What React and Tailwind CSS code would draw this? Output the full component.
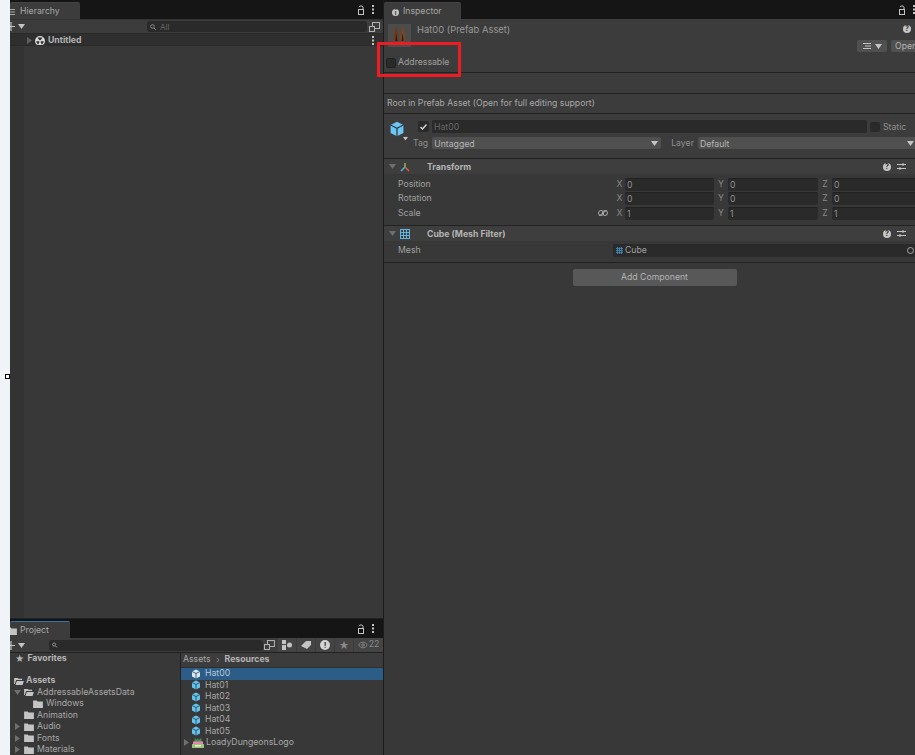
import { ChevronDown, Eye } from 'lucide-react';

const font = { fontFamily: 'Inter, sans-serif' };

function Caret({ className = '' }) {
  return (
    <svg width="7" height="5" viewBox="0 0 7 5" className={className}>
      <path d="M0 0h7L3.5 5z" fill="currentColor" />
    </svg>
  );
}

function Arrow({ className = '' }) {
  return (
    <svg width="5" height="7" viewBox="0 0 5 7" className={className}>
      <path d="M0 0v7l5-3.5z" fill="currentColor" />
    </svg>
  );
}

function Cube({ size = 10, color = '#62c4ef', seam = '#2b3a44' }) {
  return (
    <svg width={size} height={size} viewBox="0 0 20 20" className="shrink-0">
      <path d="M10 1l8 4v10l-8 4-8-4V5z" fill={color} />
      <path d="M2 5l8 4 8-4M10 9v10" fill="none" stroke={seam} strokeWidth="1.6" />
    </svg>
  );
}

function Folder({ open = false }) {
  return (
    <svg width="10" height="8" viewBox="0 0 11 9" className="shrink-0">
      {open ? (
        <path d="M0 1h4l1 1h4v1.500H2.200L0.800 8H0zM3 4.500h8L9.500 9H1.500z" fill="#c4c4c4" />
      ) : (
        <path d="M0 0.500h4l1 1.200h6V9H0z" fill="#c4c4c4" />
      )}
    </svg>
  );
}

function Help() {
  return (
    <span className="block w-[8px] h-[8px] rounded-full bg-[#c4c4c4] text-[#333] text-[7px] leading-[8px] font-bold text-center">?</span>
  );
}

function Sliders() {
  return (
    <svg width="9" height="9" viewBox="0 0 9 9" className="text-[#c4c4c4]">
      <path d="M0 2.500h9M0 6.500h9M6 1v3M3 5v3" stroke="currentColor" strokeWidth="1" fill="none" />
    </svg>
  );
}

function LockIcon() {
  return (
    <svg width="6" height="10" viewBox="0 0 6 10" fill="none" stroke="#c4c4c4" className="shrink-0">
      <rect x="0.500" y="4.500" width="5" height="5" />
      <path d="M1 2.200C1 0.500 5 0.500 5 2.200V4.500" />
    </svg>
  );
}

function Dots() {
  return (
    <svg width="2" height="9" viewBox="0 0 2 9" fill="#c4c4c4" className="shrink-0">
      <rect y="0" width="2" height="2" />
      <rect y="3.500" width="2" height="2" />
      <rect y="7" width="2" height="2" />
    </svg>
  );
}

function TabBar({ icon, label, width, gap, highlight = false, rightPad }) {
  return (
    <div className={`h-[19px] bg-[#151515] flex items-end justify-between shrink-0 ${rightPad}`}>
      <div className={`h-[17px] ${width} ${gap} bg-[#3c3c3c] rounded-t-[2px] flex items-center overflow-hidden text-[8.7px] text-[#a8a8a8] border-t pt-[2px] ${highlight ? 'border-[#3a72aa]' : 'border-[#444]'}`}>
        {icon}
        <span>{label}</span>
      </div>
      <div className="flex items-center gap-[8px] h-[19px]">
        <LockIcon />
        <Dots />
      </div>
    </div>
  );
}

function PlusMenu() {
  return (
    <div className="flex items-center gap-[3px] text-[#c4c4c4] overflow-hidden w-[16px] shrink-0">
      <svg width="7" height="9" viewBox="0 0 7 9" fill="none" stroke="currentColor" strokeWidth="1.200" className="shrink-0 ml-[-2px]">
        <path d="M3 0v9M0 4.500h7" />
      </svg>
      <Caret className="shrink-0" />
    </div>
  );
}

function Vec({ axis, value, w, label }) {
  return (
    <div className="flex items-center">
      <span className={`${label} text-[#8a8a8a] text-[8.7px] text-center`}>{axis}</span>
      <div className={`${w} h-[13px] bg-[#2a2a2a] rounded-[2px] border-t border-[#212121] text-[8.7px] leading-[12px] text-[#8f8f8f] pl-[2px]`}>{value}</div>
    </div>
  );
}

function VecRow({ label, value, linked }) {
  return (
    <div className="h-[14.500px] flex items-center pl-[14px]">
      <span className="text-[8.7px] text-[#a0a0a0] w-[200px] shrink-0">{label}</span>
      <span className="w-[16px] flex justify-start shrink-0">
        {linked && (
          <svg width="10" height="6" viewBox="0 0 10 6" fill="none" stroke="#a8a8a8">
            <rect x="0.500" y="0.500" width="5" height="5" rx="2.500" />
            <rect x="4.500" y="0.500" width="5" height="5" rx="2.500" />
            <path d="M1 6l8-6" />
          </svg>
        )}
      </span>
      <div className="flex items-center">
        <Vec axis="X" value={value} w="w-[89px]" label="w-[11px]" />
        <Vec axis="Y" value={value} w="w-[90px]" label="w-[14px]" />
        <Vec axis="Z" value={value} w="w-[90px]" label="w-[14px]" />
      </div>
    </div>
  );
}

function ComponentHeader({ icon, title }) {
  return (
    <div className="h-[16px] bg-[#3e3e3e] border-t border-[#222] flex items-center pl-[5px] pr-[9px] shrink-0">
      <Caret className="text-[#6f6f6f]" />
      <span className="w-[12px] ml-[3px] flex justify-center">{icon}</span>
      <span className="ml-[16px] text-[8.7px] leading-[15px] pt-[1px] font-bold text-[#b4b4b4] flex-1">{title}</span>
      <div className="flex items-center gap-[6px]">
        <Help />
        <Sliders />
      </div>
    </div>
  );
}

function Hierarchy() {
  return (
    <div className="flex-1 flex flex-col min-h-0">
      <TabBar width="w-[70px]" gap="gap-[5px]" label="Hierarchy" rightPad="pr-[9px]" icon={
        <svg width="5" height="6" viewBox="0 0 5 6" stroke="#a8a8a8" className="shrink-0">
          <path d="M0 0.500h5M0 3h5M0 5.500h5" />
        </svg>
      } />
      <div className="h-[14px] bg-[#3c3c3c] border-t border-[#333] flex items-center shrink-0">
        <PlusMenu />
        <div className="ml-[121px] w-[220px] h-[11px] bg-[#2a2a2a] rounded-[3px] flex items-center text-[8px] text-[#666] pl-[3px] gap-[3px]">
          <svg width="7" height="6" viewBox="0 0 7 6" fill="none" stroke="#8a8a8a"><circle cx="2.500" cy="2.500" r="1.800" /><path d="M4 4l2 2" /></svg>
          <span>All</span>
        </div>
        <svg width="11" height="10" viewBox="0 0 11 10" fill="none" stroke="#b4b4b4" className="ml-[2px]">
          <rect x="3.500" y="0.500" width="7" height="6" />
          <rect x="0.500" y="4.500" width="5" height="5" fill="#3c3c3c" />
        </svg>
      </div>
      <div className="h-[12px] bg-[#2f2f2f] flex items-center pl-[17px] pr-[9px] pt-[2px] shrink-0 border-t border-[#2a2a2a]">
        <Arrow className="text-[#5f5f5f]" />
        <svg width="10" height="10" viewBox="0 0 10 10" className="ml-[3px]">
          <circle cx="5" cy="5" r="5" fill="#d8d8d8" />
          <path d="M5 5L2.500 1.500L7.500 1.500zM5 5L1 5.500L3 8.800zM5 5L9 5.500L7 8.800z" fill="#2f2f2f" />
          <circle cx="5" cy="5" r="1" fill="#d8d8d8" />
        </svg>
        <span className="ml-[3px] text-[8.7px] font-bold text-[#b4b4b4] flex-1">Untitled</span>
        <Dots />
      </div>
      <div className="flex-1 flex bg-[#383838] border-t border-[#2a2a2a]">
        <div className="w-[14px] bg-[#333]" />
      </div>
    </div>
  );
}

function Project() {
  const tree = [
    { name: 'AddressableAssetsData', open: true, pad: 'pl-[4px]', caret: true },
    { name: 'Windows', pad: 'pl-[23px]' },
    { name: 'Animation', pad: 'pl-[14px]' },
    { name: 'Audio', pad: 'pl-[5px]', arrow: true },
    { name: 'Fonts', pad: 'pl-[5px]', arrow: true },
    { name: 'Materials', pad: 'pl-[5px]', arrow: true },
  ];
  const files = ['Hat00', 'Hat01', 'Hat02', 'Hat03', 'Hat04', 'Hat05'];

  return (
    <div className="h-[137px] flex flex-col shrink-0 border-t border-[#222]">
      <TabBar width="w-[60px]" gap="gap-[3px]" label="Project" highlight rightPad="pr-[9px]" icon={
        <span className="ml-[-3px] flex"><Folder /></span>
      } />
      <div className="h-[14px] bg-[#3c3c3c] flex items-center shrink-0">
        <PlusMenu />
        <div className="ml-[23px] w-[216px] h-[11px] bg-[#2a2a2a] rounded-[3px] flex items-center pl-[3px]">
          <svg width="6" height="6" viewBox="0 0 7 6" fill="none" stroke="#a0a0a0"><circle cx="2.500" cy="2.500" r="1.800" /><path d="M4 4l2 2" /></svg>
        </div>
        <svg width="11" height="10" viewBox="0 0 11 10" fill="none" stroke="#b4b4b4" className="ml-[1px]">
          <rect x="3.500" y="0.500" width="7" height="6" />
          <rect x="0.500" y="4.500" width="5" height="5" fill="#3c3c3c" />
        </svg>
        <div className="ml-[3px] flex items-center gap-[1px] h-[14px] text-[#c4c4c4]">
          <span className="w-[18px] h-full bg-[#444] flex items-center justify-center">
            <svg width="10" height="10" viewBox="0 0 10 10" fill="currentColor"><rect x="0" y="0" width="4" height="4" /><circle cx="7.500" cy="5" r="2.500" /><path d="M0 5h4v5H0z" /></svg>
          </span>
          <span className="w-[18px] h-full bg-[#444] flex items-center justify-center">
            <svg width="10" height="8" viewBox="0 0 10 8" fill="currentColor"><path d="M0 5l5-5h5v4l-4 4z" /></svg>
          </span>
          <span className="w-[18px] h-full bg-[#444] flex items-center justify-center">
            <span className="w-[10px] h-[10px] rounded-full bg-[#d4d4d4] text-[#333] text-[8px] leading-[10px] font-bold text-center">!</span>
          </span>
          <span className="w-[18px] h-full bg-[#444] flex items-center justify-center text-[#8a8a8a] text-[10px]">★</span>
          <span className="w-[29px] h-full bg-[#444] flex items-center justify-center gap-[1px] text-[#8a8a8a] text-[8.7px]">
            <Eye size={10} />22
          </span>
        </div>
      </div>
      <div className="flex-1 flex min-h-0 overflow-hidden bg-[#383838] border-t border-[#222] text-[8.7px] text-[#a8a8a8]">
        <div className="w-[171px] border-r border-[#222] shrink-0">
          <div className="h-[11.500px] flex items-center gap-[3px] pl-[5px] font-bold text-[#b4b4b4]">
            <span className="text-[9px] leading-none">★</span>Favorites
          </div>
          <div className="h-[10.500px]" />
          <div className="h-[11.500px] flex items-center gap-[2px] pl-[4px] font-bold text-[#b4b4b4]">
            <Folder open />Assets
          </div>
          {tree.map(item => (
            <div key={item.name} className={`h-[11.500px] flex items-center ${item.pad}`}>
              {item.caret && <Caret className="text-[#6f6f6f] mr-[3px]" />}
              {item.arrow && <Arrow className="text-[#6f6f6f] mr-[4px]" />}
              <span className="mr-[3px] flex"><Folder open={item.open} /></span>
              {item.name}
            </div>
          ))}
        </div>
        <div className="flex-1 min-w-0">
          <div className="h-[15px] flex items-center gap-[3px] pl-[2px] bg-[#3c3c3c] border-b border-[#2f2f2f]">
            Assets
            <ChevronDown size={8} className="-rotate-90" />
            <span className="font-bold text-[#b4b4b4]">Resources</span>
          </div>
          {files.map((f, i) => (
            <div key={f} className={`h-[11.500px] flex items-center gap-[4px] pl-[10px] ${i === 0 ? 'bg-[#2c5d87] text-[#b8c8d8]' : ''}`}>
              <Cube color={i === 0 ? '#d8e8f4' : '#62c4ef'} />{f}
            </div>
          ))}
          <div className="h-[11.500px] flex items-center pl-[3px] gap-[2px]">
            <Arrow className="text-[#6f6f6f]" />
            <svg width="12" height="10" viewBox="0 0 12 10" className="shrink-0 ml-[1px]">
              <path d="M2 4L3 0l2 2 1-2 1 2 2-2 1 4z" fill="#3f8f4e" />
              <rect x="1" y="3.500" width="10" height="2.500" fill="#e884b4" />
              <rect x="0" y="6" width="12" height="4" fill="#9cc47c" />
              <rect x="3" y="7" width="6" height="1.500" fill="#e8e8d0" />
            </svg>
            LoadyDungeonsLogo
          </div>
        </div>
      </div>
    </div>
  );
}

function Inspector() {
  return (
    <div className="flex-1 flex flex-col min-w-0 overflow-hidden">
      <TabBar width="w-[77px]" gap="gap-[4px]" label="Inspector" rightPad="pr-0" icon={
        <span className="ml-[8px] w-[7px] h-[7px] rounded-full bg-[#c4c4c4] text-[#333] text-[6px] leading-[7px] font-bold text-center">i</span>
      } />
      <div className="flex-1 bg-[#383838] flex flex-col text-[8.7px] text-[#a8a8a8]">
        <div className="h-[53px] bg-[#3c3c3c] relative shrink-0">
          <div className="flex pt-[5px] pl-[4px]">
            <div className="w-[23px] h-[23px] bg-[#4c4c4c] flex items-start justify-center pt-[2px] shrink-0">
              <svg width="13" height="18" viewBox="0 0 13 18">
                <path d="M1 16C0.500 10 1.500 4 3.500 0.500 5 5 5.500 10 5.500 16z" fill="#6e3a18" />
                <path d="M12 16C12.500 10 11.500 4 9.500 0.500 8 5 7.500 10 7.500 16z" fill="#7e4420" />
                <path d="M2.500 15L3.200 7 4.400 15zM10.500 15L9.800 7 8.600 15z" fill="#2e1a0e" />
              </svg>
            </div>
            <span className="ml-[6px] text-[9.400px] leading-[12px] text-[#9a9a9a]">Hat00 (Prefab Asset)</span>
            <span className="ml-auto mr-[4px] mt-[1px]"><Help /></span>
          </div>
          <div className="flex items-center mt-[9px] pl-[2px]">
            <span className="w-[10px] h-[10px] bg-[#2a2a2a] rounded-[2px] border border-[#222]" />
            <span className="ml-[2px] text-[#a0a0a0]">Addressable</span>
          </div>
          <div className="absolute right-0 top-[21px] flex gap-[4px]">
            <span className="w-[30px] h-[12px] bg-[#505050] rounded-[2px] flex items-center justify-center gap-[4px] text-[#c4c4c4]">
              <svg width="8" height="6" viewBox="0 0 8 6" stroke="#c4c4c4" fill="none"><path d="M0 0.500h8M2 3h6M0 5.500h8" /></svg>
              <Caret />
            </span>
            <span className="w-[24px] h-[12px] bg-[#505050] rounded-l-[2px] text-[8.7px] leading-[12px] pl-[4px] text-[#b4b4b4] overflow-hidden">Open</span>
          </div>
        </div>
        <div className="h-[21px] border-t border-[#222] bg-[#3c3c3c] shrink-0" />
        <div className="h-[20px] border-t border-[#222] bg-[#3c3c3c] flex items-center pl-[3px] text-[#a8a8a8] shrink-0">
          Root in Prefab Asset (Open for full editing support)
        </div>
        <div className="h-[45px] border-t border-[#222] bg-[#3c3c3c] flex shrink-0">
          <div className="pl-[5px] pt-[7px] w-[34px] relative shrink-0">
            <Cube size={16} color="#6cc8f2" />
            <Caret className="absolute left-[18px] top-[22px] text-[#c4c4c4] scale-75" />
          </div>
          <div className="flex-1 min-w-0 pt-[6px]">
            <div className="flex items-center h-[13px]">
              <span className="w-[11px] h-[11px] bg-[#2a2a2a] rounded-[2px] flex items-center justify-center">
                <svg width="7" height="6" viewBox="0 0 7 6" fill="none" stroke="#d8d8d8" strokeWidth="1.400"><path d="M0.500 3l2 2L6.500 0.500" /></svg>
              </span>
              <div className="ml-[3px] w-[435px] h-[13px] bg-[#2a2a2a] rounded-[2px] pl-[2px] text-[#666] leading-[14px]">Hat00</div>
              <span className="ml-[3px] w-[10px] h-[10px] bg-[#2a2a2a] rounded-[2px]" />
              <span className="ml-[3px] text-[#8f8f8f] leading-[14px]">Static</span>
            </div>
            <div className="flex items-center h-[12px] mt-[4px] -ml-[5px] leading-[14px]">
              <span className="text-[#8f8f8f] leading-[14px]">Tag</span>
              <div className="ml-[4px] w-[229px] h-[12px] bg-[#505050] rounded-[2px] flex items-center justify-between px-[2px] pr-[3px] pt-[1px] text-[#b4b4b4]">
                Untagged<Caret className="text-[#c4c4c4]" />
              </div>
              <span className="ml-[10px] text-[#8f8f8f] leading-[14px]">Layer</span>
              <div className="ml-[4px] flex-1 h-[12px] bg-[#505050] rounded-l-[2px] flex items-center justify-between pl-[2px] pr-[1px] pt-[1px] text-[#b4b4b4]">
                Default<Caret className="text-[#c4c4c4]" />
              </div>
            </div>
          </div>
        </div>
        <ComponentHeader title="Transform" icon={
          <svg width="10" height="10" viewBox="0 0 10 10" fill="none" strokeWidth="1.500">
            <path d="M5 5V1" stroke="#7fc04f" />
            <path d="M5 5L1 9" stroke="#4fb4e0" />
            <path d="M5 5l4 4" stroke="#e0603f" />
          </svg>
        } />
        <div className="h-[51px] pt-[3px] shrink-0 overflow-hidden">
          <VecRow label="Position" value="0" />
          <VecRow label="Rotation" value="0" />
          <VecRow label="Scale" value="1" linked />
        </div>
        <ComponentHeader title="Cube (Mesh Filter)" icon={
          <svg width="10" height="10" viewBox="0 0 10 10" fill="none" stroke="#62b4e0" strokeWidth="1">
            <rect x="0.500" y="0.500" width="9" height="9" />
            <path d="M3.500 0v10M6.500 0v10M0 3.500h10M0 6.500h10" />
          </svg>
        } />
        <div className="h-[21px] flex items-start pt-[3px] pl-[14px] shrink-0">
          <span className="w-[215px] text-[#a0a0a0] leading-[13px]">Mesh</span>
          <div className="flex-1 h-[13px] bg-[#2a2a2a] rounded-l-[2px] flex items-center gap-[2px] pl-[3px] text-[#a0a0a0]">
            <svg width="7" height="7" viewBox="0 0 7 7" stroke="#3f7fa8" fill="none"><path d="M0 1.500h7M0 3.500h7M0 5.500h7M1.500 0v7M3.500 0v7M5.500 0v7" /></svg>
            Cube
            <span className="ml-auto w-[7px] h-[7px] rounded-full border border-[#a8a8a8] mr-[1px]" />
          </div>
        </div>
        <div className="border-t border-[#222] pt-[6px] flex justify-center pl-[10px]">
          <button className="w-[164px] h-[17px] bg-[#585858] rounded-[2px] text-[#b4b4b4] text-[8.7px]">Add Component</button>
        </div>
      </div>
    </div>
  );
}

export default function App() {
  return (
    <div className="w-[915px] h-[755px] flex relative overflow-hidden bg-[#383838]" style={font}>
      <div className="w-[10px] bg-[#f0f4f8] shrink-0" />
      <div className="w-[373px] flex flex-col shrink-0">
        <Hierarchy />
        <Project />
      </div>
      <div className="w-[1px] bg-[#1c1c1c] shrink-0" />
      <Inspector />

      {/* window resize handle */}
      <span className="absolute left-[5px] top-[374px] w-[5px] h-[5px] bg-white border border-black" />
      {/* red annotation box */}
      <span className="absolute left-[377px] top-[42px] w-[84px] h-[35px] border-[3px] border-[#ed1c24]" />
    </div>
  );
}
